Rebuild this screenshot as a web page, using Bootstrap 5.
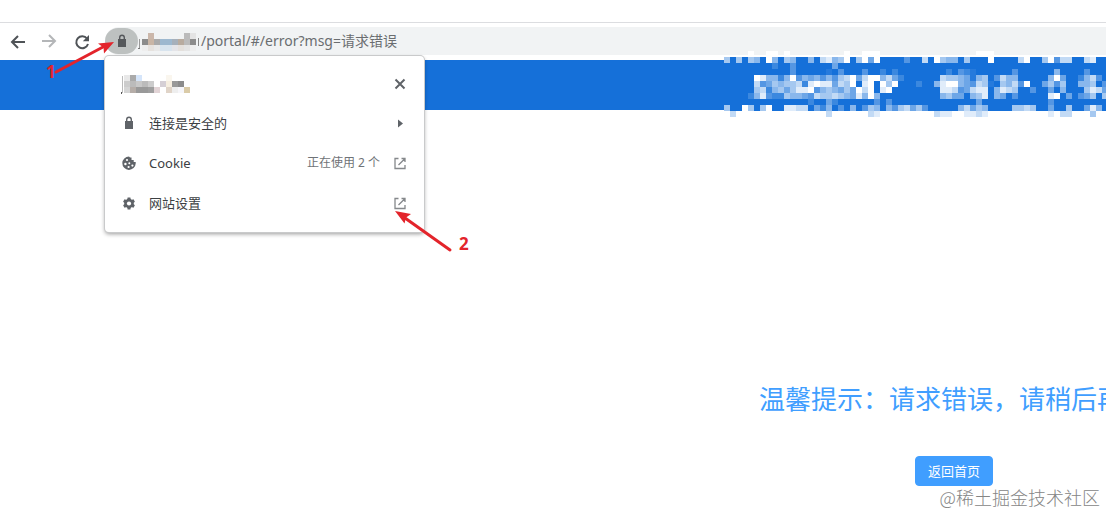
<!DOCTYPE html>
<html lang="zh-CN">
<head>
<meta charset="utf-8">
<meta name="viewport" content="width=device-width, initial-scale=1">
<title>请求错误</title>
<link href="https://cdn.jsdelivr.net/npm/bootstrap@5.3.0/dist/css/bootstrap.min.css" rel="stylesheet">
<style>
  body { font-family: "Noto Sans", "Noto Sans CJK SC", sans-serif; color: #3c4043; background: #fff; }
  .window { min-height: 100vh; }
  .tabstrip { height: 23px; border-bottom: 1px solid #dcdde0; }
  .toolbar { height: 37px; padding: 4px 0 5px 7px; }
  .toolbar .tool { width: 20px; height: 20px; margin-right: 12px; color: #4f5357; line-height: 0; }
  .toolbar .tool:disabled { color: #b4b6b8; border: 0; opacity: 1; }
  .omnibox { height: 28px; background: #f1f3f4; border-radius: 14px 0 0 14px; margin-left: 2px; }
  .lock-btn { width: 33px; height: 26px; border-radius: 13px; background: #bdc1c0; line-height: 0; color: #55585b; }
  .url { font-size: 14px; line-height: 28px; color: #6a6d70; }
  .url-host { width: 63px; height: 20px; }
  .site-panel { top: 56px; left: 105px; width: 319px; padding: 8px 0 9px; background: #fff; border-radius: 4px; box-shadow: 0 0 0 1px #c9cacb, 0 2px 4px rgba(0,0,0,.4); z-index: 3; }
  .panel-row { height: 40px; padding: 0 16px; gap: 12px; font-size: 13px; line-height: 20px; color: #3c4043; }
  .panel-head { height: 39px; }
  .panel-row svg { flex: none; color: #5f6368; }
  .panel-row .open-icon { color: #85888b; }
  .panel-row .note { font-size: 12px; color: #6f7377; }
  .site-header { height: 50px; background: #1570d9; }
  .canvas-wide { width: 1908px; }
  .header-name { top: -9px; left: 724px; }
  .error-body { padding-top: 269px; }
  .error-title { font-size: 26px; line-height: 40px; margin-bottom: 37px; color: #409eff; font-weight: 400; }
  .home-btn { height: 30px; padding: 0 12px; font-size: 13px; line-height: 20px; background: #409eff; color: #fff; border-radius: 4px; border: 1px solid #409eff; }
  .watermark { right: 6px; bottom: 5px; font-size: 18px; line-height: 26px; font-weight: 300; color: #858585; font-family: "Noto Sans CJK SC", sans-serif; }
  .callout { z-index: 4; pointer-events: none; }
  .callout text { font: 700 17px "Open Sans", sans-serif; fill: #e3242b; }
  .callout path { fill: #e3242b; }
  .callout line { stroke: #e3242b; stroke-width: 3; stroke-linecap: round; }
  .callout-one { left: 44px; top: 38px; }
  .callout-two { left: 392px; top: 208px; }
</style>
</head>
<body>
<div class="window position-relative overflow-hidden">
  <div class="tabstrip"></div>
  <nav class="toolbar d-flex align-items-center" aria-label="浏览器工具栏">
    <button class="tool btn p-0" type="button" aria-label="后退"><svg width="20" height="20" viewBox="0 0 20 20" fill="none" stroke="currentColor" stroke-width="2"><path d="M17 10H4M10 4l-6 6 6 6"/></svg></button>
    <button class="tool btn p-0" type="button" aria-label="前进" disabled><svg width="20" height="20" viewBox="0 0 20 20" fill="none" stroke="currentColor" stroke-width="2"><path d="M3 10h13M10 4l6 6-6 6"/></svg></button>
    <button class="tool btn p-0" type="button" aria-label="重新加载"><svg width="20" height="20" viewBox="0 0 20 20" fill="none" stroke="currentColor" stroke-width="2"><path d="M15 6.5A6 6 0 1 0 16 12"/><path d="M17 3v6.200h-6.200z" fill="currentColor" stroke="none"/></svg></button>
    <div class="omnibox flex-grow-1 d-flex align-items-center">
      <button class="lock-btn btn p-0" type="button" aria-label="查看网站信息"><svg width="16" height="16" viewBox="0 0 16 16"><path fill="currentColor" d="M4 6h8v8H4z"/><path d="M5.700 7V4.500a2.300 2.300 0 0 1 4.600 0V7" fill="none" stroke="currentColor" stroke-width="1.400"/></svg></button>
      <svg class="url-host" viewBox="138 31 63 20" data-tiles="host"></svg>
      <span class="url">/portal/#/error?msg=请求错误</span>
    </div>
  </nav>

  <header class="site-header position-relative">
    <svg class="header-name position-absolute" width="384" height="66" viewBox="0 0 384 66" shape-rendering="crispEdges" data-tiles="name"></svg>
  </header>

  <main class="canvas-wide error-body text-center">
    <h1 class="error-title">温馨提示：请求错误，请稍后再试</h1>
    <button class="home-btn btn" type="button">返回首页</button>
  </main>

  <section class="site-panel position-absolute" aria-label="网站信息">
    <div class="panel-row panel-head d-flex align-items-center">
      <svg width="72" height="22" viewBox="121 73 72 22" data-tiles="title"></svg>
      <button class="btn p-0 border-0 ms-auto lh-1" type="button" aria-label="关闭"><svg class="d-block" width="16" height="16" viewBox="0 0 16 16" stroke="currentColor" stroke-width="2"><path d="M3.500 3.500l9 9M12.500 3.500l-9 9"/></svg></button>
    </div>
    <a class="panel-row d-flex align-items-center text-decoration-none" href="#">
      <svg width="16" height="16" viewBox="0 0 16 16"><path fill="currentColor" d="M4 6h8v8H4z"/><path d="M5.700 7V4.500a2.300 2.300 0 0 1 4.600 0V7" fill="none" stroke="currentColor" stroke-width="1.400"/></svg>
      <span class="me-auto">连接是安全的</span>
      <svg width="16" height="16" viewBox="0 0 16 16"><path fill="currentColor" d="M6 4.500l5 4-5 4z"/></svg>
    </a>
    <a class="panel-row d-flex align-items-center text-decoration-none" href="#">
      <svg width="16" height="16" viewBox="0 0 16 16"><path fill="currentColor" d="M8 1.500a6.700 6.700 0 1 0 6.700 7V7h-2V5h-2.200V2.500H9z"/><g fill="#fff"><circle cx="6" cy="5" r="1.100"/><circle cx="4.400" cy="9" r="1.200"/><circle cx="8.300" cy="8.300" r="1"/><circle cx="7.600" cy="12" r="1.100"/><circle cx="11.400" cy="10.600" r="1.100"/></g></svg>
      <span class="me-auto">Cookie</span>
      <span class="note">正在使用 2 个</span>
      <svg class="open-icon" width="16" height="16" viewBox="0 0 16 16" fill="none" stroke="currentColor" stroke-width="1.300"><path d="M6.500 3.500H3v10h10V10M9.500 3.500h3.500V7M12.800 3.700l-6.300 6.300"/></svg>
    </a>
    <a class="panel-row d-flex align-items-center text-decoration-none" href="#">
      <svg width="16" height="16" viewBox="0 0 16 16"><g fill="currentColor"><circle cx="8" cy="8.500" r="4.700"/><path d="M6.600 2.500h2.800l.5 3H6.100zM6.600 14.500h2.800l.5-3H6.100z"/><path d="M6.600 2.500h2.800l.5 3H6.100zM6.600 14.500h2.800l.5-3H6.100z" transform="rotate(60 8 8.500)"/><path d="M6.600 2.500h2.800l.5 3H6.100zM6.600 14.500h2.800l.5-3H6.100z" transform="rotate(120 8 8.500)"/></g><circle cx="8" cy="8.500" r="2.100" fill="#fff"/></svg>
      <span class="me-auto">网站设置</span>
      <svg class="open-icon" width="16" height="16" viewBox="0 0 16 16" fill="none" stroke="currentColor" stroke-width="1.300"><path d="M6.500 3.500H3v10h10V10M9.500 3.500h3.500V7M12.800 3.700l-6.300 6.300"/></svg>
    </a>
  </section>

  <svg class="callout callout-one position-absolute" width="72" height="44" viewBox="44 38 72 44"><text x="46" y="78">1</text><line x1="56" y1="72" x2="103" y2="47"/><path d="M114 42l-10 11.500-.5-6-5.500-4z"/></svg>
  <svg class="callout callout-two position-absolute" width="84" height="48" viewBox="392 208 84 48"><text x="459" y="250">2</text><line x1="450" y1="250" x2="405" y2="218"/><path d="M395 211l16 3-5 3.500-1.500 6z"/></svg>

  <div class="watermark position-absolute">@稀土掘金技术社区</div>
</div>

<script>
// Pixelated names: each entry lists tile rows of 6px squares.
// Digits run from header blue (0) to white (9); a dot leaves the tile empty.
const nameRows = [
  "....9..99.9........." + "9..999.........." + "......999..................." ,
  "6060650950650050" + "7856906949000030" + "0709655060009000" + "0790069377007800",
  "0000000020030000" + "0040000000000000" + "0000000000000000" + "0000000000000000",
  "0000000000030000" + "0103000300202000" + "0000020321000000" + "3000000500003000",
  "0000098552593545" + "3536794799574200" + "0000766541560375" + "5000005940025730",
  "0000073465667289" + "8847690890969000" + "2005899543761065" + "7390046360055603",
  "0000067256468893" + "5654649790890000" + "0000887347880587" + "6003004050006874",
  "0000258322655437" + "6676548595000000" + "0000564405680540" + "3000008904034606",
  "0000000000000020" + "0420000003030000" + "0000000000400000" + "0000003000000000",
  "6009606900887704" + "2503050365053674" + "6300000574650000" + "6676004006004850",
  ".7.............." + ".7......78......" + "...788..8878...." + "......8.77...6.."
];
const NS = "http://www.w3.org/2000/svg";
const tile = (svg, x, y, w, h, fill) => {
  const r = document.createElementNS(NS, "rect");
  for (const [k, v] of Object.entries({ x, y, width: w, height: h, fill })) r.setAttribute(k, v);
  svg.append(r);
};
const blend = n => "rgb(" + [21, 112, 217].map(c => Math.round(c + (255 - c) * Math.pow(n / 9, 1.2))).join() + ")";
const pick = id => document.querySelector(`[data-tiles=${id}]`);
nameRows.forEach((row, j) => [...row].forEach((ch, i) => {
  if (ch !== ".") tile(pick("name"), i * 6, j * 6, 6, 6, blend(+ch));
}));
const paint = (svg, x, y, rows) => rows.forEach((row, j) => row.split(" ").forEach((c, i) => {
  if (c !== "-") tile(svg, x + i * 6, y + j * 6, 6, 6, "#" + c);
}));
paint(pick("host"), 142, 33, [
  "- cbb7aa - - - - - bbb e4e4e4",
  "8c8c8c c9b5a5 aaa 9db8cf 9db8cf a6b0bb b8ab9f bbb 8c8c8c",
  "eee e6e2de e8e8e8 d8e4ee d8e4ee e4e4e8 e4e0dc e4e4e4 eee"
]);
tile(pick("host"), 139, 39, 1, 10, "#999");
tile(pick("host"), 138, 48, 2, 1, "#777");
tile(pick("host"), 198, 38, 1, 8, "#888");
paint(pick("title"), 124, 75, [
  "e8e8e8 aaa d5e5fa - - - - faf6ee - - -",
  "ccc bbb c8c8c8 bbb ccc - d5cfd5 f6eee0 999 8c8c8c -",
  "d5d5d5 b5ada8 999 999 9f9f9f e2d4d6 - e0d4c8 eee f6f6fa dacba8"
]);
tile(pick("title"), 122, 76, 1, 17, "#bbb");
tile(pick("title"), 121, 92, 1, 2, "#555");
</script>
<script src="https://cdn.jsdelivr.net/npm/bootstrap@5.3.0/dist/js/bootstrap.bundle.min.js"></script>
</body>
</html>
